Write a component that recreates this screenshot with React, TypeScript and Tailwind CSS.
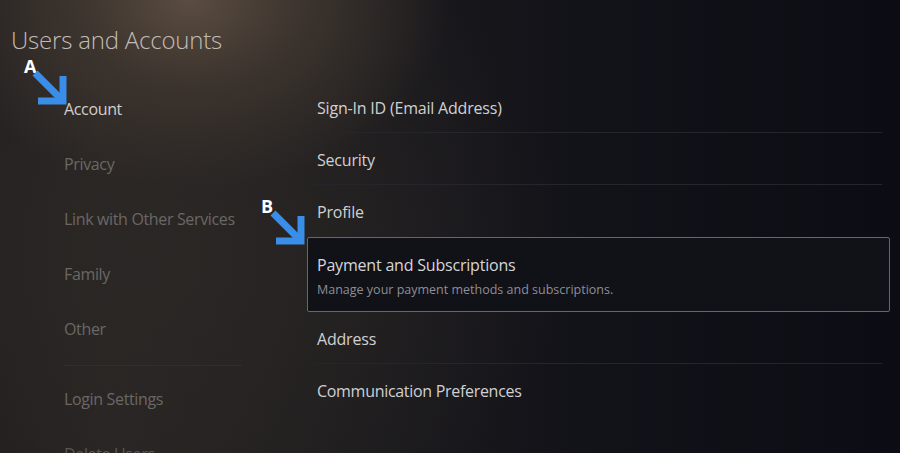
import React from 'react';

const leftItems = ['Account', 'Privacy', 'Link with Other Services', 'Family', 'Other'];

const rightItems = ['Sign-In ID (Email Address)', 'Security', 'Profile'];

const Arrow: React.FC<{ className: string }> = ({ className }) => (
    <svg className={className} viewBox="0 0 38 38" fill="none">
        <path d="M3 3 L28 28" stroke="#3a8ee8" strokeWidth={7} />
        <path d="M31 6 L31 31 L6 31" stroke="#3a8ee8" strokeWidth={7} strokeLinejoin="miter" />
    </svg>
);

const App: React.FC = () => {
    return (
        <div
            className="relative h-[453px] w-[900px] overflow-hidden bg-[radial-gradient(ellipse_260px_190px_at_190px_0px,#5a4c41_0%,#3b332d_45%,transparent_100%),radial-gradient(ellipse_420px_380px_at_140px_250px,#2b2725_0%,transparent_100%),linear-gradient(90deg,#1f1d1e_0%,#292524_12%,#1c1b1d_38%,#121219_65%,#0c0c14_100%)] text-[#d2d0ce]"
            style={{ fontFamily: '"Open Sans", "Noto Sans", sans-serif' }}
        >
            <h1 className="pl-[11px] pt-[24px] text-[24px] leading-[32px] font-light tracking-[-0.2px] text-[#c2bcb6]">
                Users and Accounts
            </h1>

            <div className="mt-[25px] flex">
                <nav className="ml-[64px] w-[178px]">
                    {leftItems.map((item, i) => (
                        <div
                            key={item}
                            className={`flex h-[55px] items-center text-[16px] tracking-[-0.35px] ${
                                i === 0 ? 'text-[#d3cec9]' : 'text-[#6b6764]'
                            }`}
                        >
                            {item}
                        </div>
                    ))}
                    <div className="mt-[9px] border-t border-[#312e2d]" />
                    <div className="flex h-[66px] items-center text-[16px] tracking-[-0.35px] text-[#6b6764]">
                        Login Settings
                    </div>
                    <div className="flex h-[44px] items-center text-[16px] tracking-[-0.35px] text-[#5a5756]">
                        Delete Users
                    </div>
                </nav>

                <div className="ml-[65px] w-[583px]">
                    {rightItems.map((item, i) => (
                        <div
                            key={item}
                            className={`mx-[8px] flex h-[52px] items-center pl-[2px] pt-[2px] text-[16px] tracking-[-0.2px] text-[#d0d0d3] ${
                                i < 2 ? 'border-b border-[#25252b]' : ''
                            }`}
                        >
                            {item}
                        </div>
                    ))}
                    <div className="flex h-[75px] flex-col justify-center gap-[6px] rounded-[2px] border-[1.5px] border-[#66666c] bg-[#111118] pl-[9px] pt-[2px]">
                        <div className="text-[16px] leading-[22px] tracking-[-0.2px] text-[#d6d6d9]">
                            Payment and Subscriptions
                        </div>
                        <div className="text-[12.5px] leading-[16px] tracking-[0px] text-[#8e8e94]">
                            Manage your payment methods and subscriptions.
                        </div>
                    </div>
                    <div className="mx-[8px] flex h-[52px] items-center border-b border-[#25252b] pl-[2px] pt-[2px] text-[16px] tracking-[-0.2px] text-[#d0d0d3]">
                        Address
                    </div>
                    <div className="mx-[8px] flex h-[52px] items-center pl-[2px] pt-[2px] text-[16px] tracking-[-0.3px] text-[#d0d0d3]">
                        Communication Preferences
                    </div>
                </div>
            </div>

            {/* annotations */}
            <span className="absolute left-[24px] top-[53px] text-[18px] font-bold text-white">A</span>
            <Arrow className="absolute left-[32px] top-[70px] h-[38px] w-[38px]" />
            <span className="absolute left-[261px] top-[193px] text-[18px] font-bold text-white">B</span>
            <Arrow className="absolute left-[270px] top-[210px] h-[38px] w-[38px]" />
        </div>
    );
};

export default App;
